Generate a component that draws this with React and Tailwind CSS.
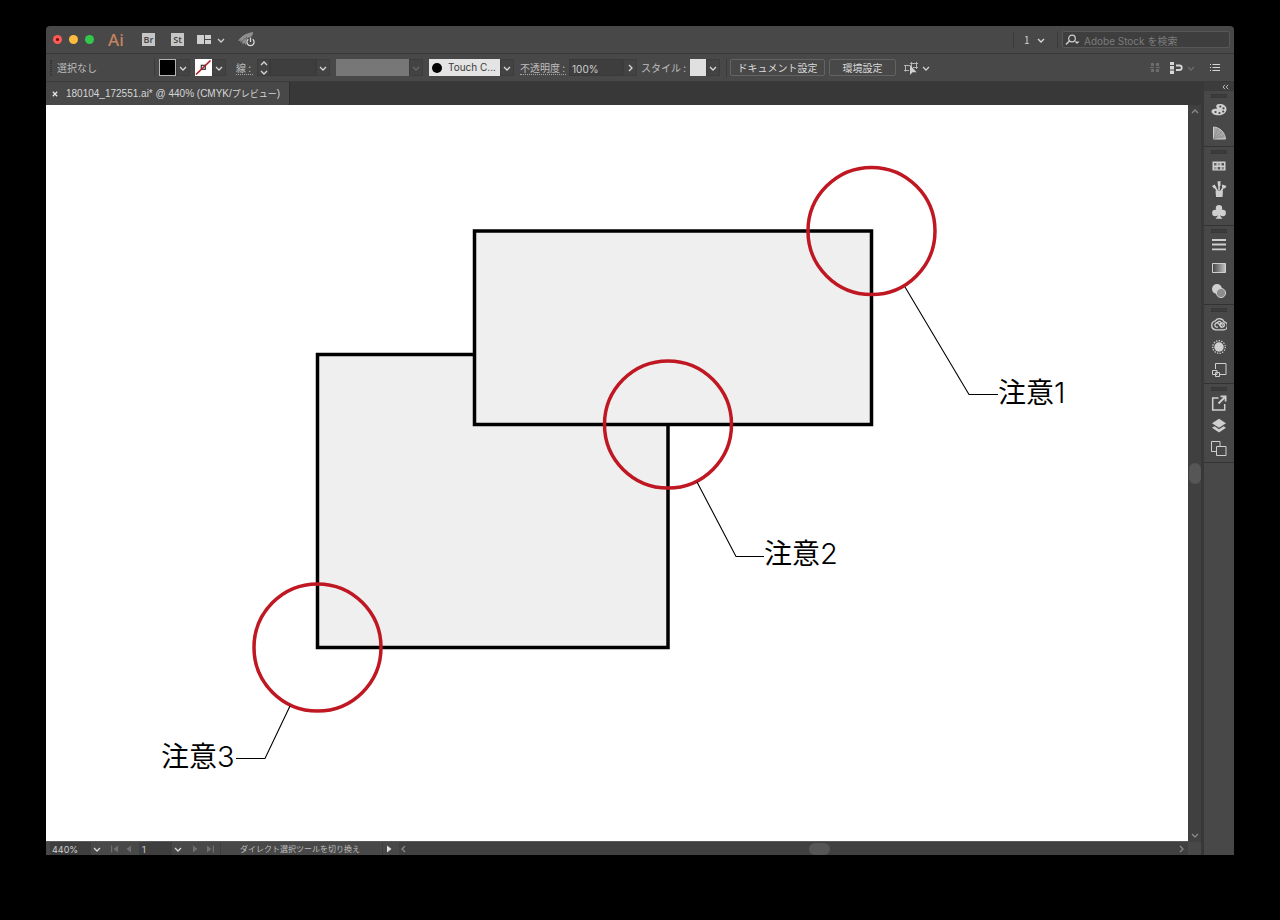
import React from "react";

function Chevron({ dir = "down", className = "" }) {
  const paths = {
    down: "M1 3 L4 6 L7 3",
    up: "M1 5 L4 2 L7 5",
    left: "M5 1 L2 4 L5 7",
    right: "M3 1 L6 4 L3 7",
  };
  return (
    <svg viewBox="0 0 8 8" className={`size-2 shrink-0 ${className}`} fill="none" stroke="currentColor" strokeWidth="1.3" aria-hidden="true">
      <path d={paths[dir]} />
    </svg>
  );
}

function ArrowButton({ label, dir = "down", className = "text-[#d8d8d8]" }) {
  return (
    <button type="button" aria-label={label} className={`flex h-[17px] w-[14px] shrink-0 items-center justify-center border border-[#3d3d3d] bg-[#434343] ${className}`}>
      <Chevron dir={dir} />
    </button>
  );
}

function Divider({ className = "h-[18px]" }) {
  return <span className={`w-px shrink-0 bg-[#3a3a3a] ${className}`} />;
}

function TitleBar() {
  return (
    <header className="flex h-[28px] shrink-0 items-center border-b border-[#383838] pr-[4px] pl-[7px]">
      <div className="flex items-center gap-[7px]">
        <button type="button" aria-label="閉じる" className="flex size-[9px] items-center justify-center rounded-full bg-[#fc5b57]">
          <span className="size-[3px] rounded-full bg-[#6b0d0a]" />
        </button>
        <button type="button" aria-label="しまう" className="size-[9px] rounded-full bg-[#fdbc40]" />
        <button type="button" aria-label="拡大" className="size-[9px] rounded-full bg-[#34c84a]" />
      </div>
      <span className="ml-[14px] w-[34px] font-['Noto_Sans',sans-serif] text-[17px] leading-[20px] font-medium text-[#c4845f]">Ai</span>
      <button type="button" className="h-[13px] w-[13px] bg-[#c6c6c6] text-center font-['Noto_Sans',sans-serif] text-[9px] leading-[13px] font-semibold text-[#484848]">Br</button>
      <button type="button" className="ml-4 h-[13px] w-[13px] bg-[#c6c6c6] text-center font-['Noto_Sans',sans-serif] text-[9px] leading-[13px] font-semibold text-[#484848]">St</button>
      <button type="button" aria-label="ドキュメントレイアウト" className="ml-[13px] flex items-center gap-[6px] text-[#cfcfcf]">
        <svg viewBox="0 0 14 9" className="h-[9px] w-[14px]" fill="currentColor" aria-hidden="true">
          <path d="M0 0h7v9H0zM8 0h6v4H8zM8 5h6v4H8z" />
        </svg>
        <Chevron />
      </button>
      <button type="button" aria-label="GPU パフォーマンス" className="ml-[13px]">
        <svg viewBox="0 0 18 15" className="h-[15px] w-[18px]" fill="none" aria-hidden="true">
          <path d="M0 9 C3 4 8 1 15 0 C15.500 3 13 5 11 6 C9 8 8.500 11 8 13.500 L6.500 11 L4.500 12.500 L4.500 10 L2 10.500 L3 8.500 Z" fill="#8f8f8f" />
          <path d="M3 10 L9 5" stroke="#5a5a5a" strokeWidth=".8" />
          <circle cx="12.500" cy="10" r="4.800" fill="#484848" />
          <path d="M10.300 7.200a3.600 3.600 0 1 0 4.400 0M12.500 5.500v4.500" stroke="#d6d6d6" strokeWidth="1.300" />
        </svg>
      </button>
      <div className="ml-auto flex items-center">
        <Divider className="h-[16px]" />
        <div className="relative ml-[10px] flex items-center">
          <select aria-label="ワークスペース" className="w-[21px] appearance-none bg-transparent text-[10px] leading-[14px] text-[#cfcfcf] outline-none" defaultValue="1">
            <option>1</option>
          </select>
          <Chevron className="pointer-events-none absolute right-0 text-[#d8d8d8]" />
        </div>
        <Divider className="ml-[12px] h-[16px]" />
        <label className="ml-[4px] flex h-[17px] w-[168px] items-center rounded-[2px] border border-[#575757] bg-[#3e3e3e] pl-[2px]">
          <svg viewBox="0 0 15 12" className="h-[12px] w-[15px] shrink-0" fill="none" aria-hidden="true">
            <circle cx="7" cy="4.500" r="3.300" stroke="#cfcfcf" strokeWidth="1.200" />
            <path d="M4.600 6.800 L1 10.500" stroke="#cfcfcf" strokeWidth="1.400" />
            <path d="M9.500 7.500h5L12 10z" fill="#cfcfcf" />
          </svg>
          <input type="search" aria-label="Adobe Stock を検索" placeholder="Adobe Stock を検索" className="ml-[4px] min-w-0 flex-1 bg-transparent pt-[2px] font-[Inter,'Noto_Sans_CJK_JP',sans-serif] text-[10px] leading-[14px] text-[#cfcfcf] outline-none placeholder:text-[#7c7c7c]" />
        </label>
      </div>
    </header>
  );
}

function ControlBar() {
  return (
    <div className="flex h-[28px] shrink-0 items-center border-b border-[#3a3a3a] pr-[14px] pl-[4px] text-[10px] text-[#bdbdbd]">
      <span className="h-[16px] w-[2px] shrink-0 border-x border-dotted border-[#333]" />
      <span className="ml-[5px] w-[97px] shrink-0">選択なし</span>
      <Divider />
      <button type="button" aria-label="塗り" className="ml-[4px] size-[17px] shrink-0 border border-[#b4b4b4] bg-black" />
      <ArrowButton label="塗りの一覧" />
      <button type="button" aria-label="線のカラー" className="ml-[5px] size-[17px] shrink-0 bg-white">
        <svg viewBox="0 0 17 17" className="size-[17px]" fill="none" aria-hidden="true">
          <rect x="6.300" y="6.300" width="4" height="4" stroke="#333" strokeWidth="1.200" />
          <path d="M1 15.500 L15.500 1.500" stroke="#b01e24" strokeWidth="1.700" />
        </svg>
      </button>
      <ArrowButton label="線のカラー一覧" />
      <label htmlFor="stroke" className="ml-[10px] w-[17px] shrink-0 border-b border-dotted border-[#a8a8a8] leading-[13px] whitespace-nowrap">線 :</label>
      <div className="ml-[4px] flex h-[17px] w-[13px] shrink-0 flex-col items-center border border-[#3a3a3a] bg-[#434343] text-[#d8d8d8]">
        <button type="button" aria-label="増やす"><Chevron dir="up" className="block" /></button>
        <button type="button" aria-label="減らす"><Chevron className="block" /></button>
      </div>
      <input id="stroke" type="text" className="h-[17px] w-[46px] shrink-0 border border-[#3a3a3a] bg-[#3e3e3e] px-1 outline-none" />
      <ArrowButton label="線幅の一覧" />
      <button type="button" aria-label="可変線幅プロファイル" disabled className="ml-[6px] h-[17px] w-[73px] shrink-0 bg-[#777]" />
      <ArrowButton label="プロファイル一覧" className="text-[#666]" />
      <div className="relative ml-[6px] flex shrink-0 items-center">
        <span className="pointer-events-none absolute left-[3px] size-[10px] rounded-full bg-black" />
        <select aria-label="ブラシ定義" defaultValue="Touch C..." className="h-[17px] w-[71px] appearance-none bg-[#e4e4e4] pl-[19px] font-[Inter,sans-serif] text-[10px] text-[#3a3a3a] outline-none">
          <option>Touch C...</option>
        </select>
        <ArrowButton label="ブラシ一覧" />
      </div>
      <label htmlFor="opacity" className="ml-[6px] w-[46px] shrink-0 border-b border-dotted border-[#a8a8a8] leading-[13px] whitespace-nowrap">不透明度 :</label>
      <input id="opacity" type="text" defaultValue="100%" className="ml-[3px] h-[17px] w-[54px] shrink-0 border border-[#3a3a3a] bg-[#3e3e3e] pt-[2px] pl-[2px] font-[Inter,sans-serif] text-[10px] text-[#cfcfcf] outline-none" />
      <ArrowButton label="不透明度スライダー" dir="right" />
      <span className="ml-[4px] w-[49px] shrink-0 whitespace-nowrap">スタイル :</span>
      <button type="button" aria-label="グラフィックスタイル" className="h-[17px] w-[16px] shrink-0 bg-[#e0e0e0]" />
      <ArrowButton label="スタイル一覧" />
      <Divider className="ml-[6px] h-[18px]" />
      <button type="button" className="ml-[3px] h-[17px] w-[95px] shrink-0 rounded-[2px] border border-[#636363] leading-[15px] whitespace-nowrap text-[#dadada]">ドキュメント設定</button>
      <button type="button" className="ml-[4px] h-[17px] w-[67px] shrink-0 rounded-[2px] border border-[#636363] leading-[15px] whitespace-nowrap text-[#dadada]">環境設定</button>
      <button type="button" aria-label="類似オブジェクトを選択" className="ml-[8px] flex shrink-0 items-center gap-[4px] text-[#d0d0d0]">
        <svg viewBox="0 0 14 14" className="size-[14px]" fill="none" aria-hidden="true">
          <path d="M0 4.500h6M1.500 4.500v6M0 9.500h5M6 2.500h8M7.500 1v5M12.500 1v7M9 6.500h5" stroke="#b5b5b5" />
          <path d="M6 4v10l2.600-2.700h4z" fill="#d0d0d0" />
        </svg>
        <Chevron />
      </button>
      <div className="ml-auto flex items-center">
        <button type="button" aria-label="整列" disabled className="text-[#6c6c6c]">
          <svg viewBox="0 0 10 10" className="size-[10px]" fill="currentColor" aria-hidden="true">
            <path d="M1 0h3v3H1zM6 0h3v3H6zM1 6h3v3H1zM6 6h3v3H6zM0 4h4v1H0zM6 4h4v1H6z" />
          </svg>
        </button>
        <button type="button" aria-label="ピクセルグリッドに整合" className="ml-[10px] text-[#d6d6d6]">
          <svg viewBox="0 0 13 12" className="h-[12px] w-[13px]" fill="none" aria-hidden="true">
            <path d="M0 0h4v3H0zM0 4h4v3.500H0zM0 8.500h4V12H0z" fill="currentColor" />
            <path d="M6 3.500h3.500a2.200 2.200 0 0 1 0 4.500H6" stroke="currentColor" strokeWidth="1.800" />
          </svg>
        </button>
        <Chevron className="ml-[4px] text-[#6c6c6c]" />
        <button type="button" aria-label="コントロールメニュー" className="ml-[15px] text-[#d6d6d6]">
          <svg viewBox="0 0 10 8" className="h-[8px] w-[10px]" fill="currentColor" aria-hidden="true">
            <path d="M0 0h1v1H0zM2.500 0H10v1H2.500zM0 3h1v1H0zM2.500 3H10v1H2.500zM0 6h1v1H0zM2.500 6H10v1H2.500z" />
          </svg>
        </button>
      </div>
    </div>
  );
}

function TabBar() {
  return (
    <div role="tablist" className="flex h-[23px] shrink-0 items-stretch bg-[#383838]">
      <div role="tab" aria-selected="true" className="flex items-center border-r border-[#2e2e2e] bg-[#484848] pr-[9px] pl-[6px] text-[10px] text-[#d6d6d6]">
        <button type="button" aria-label="タブを閉じる" className="text-[#e6e6e6]">
          <svg viewBox="0 0 6 6" className="size-[6px]" stroke="currentColor" strokeWidth="1.300" aria-hidden="true">
            <path d="M.8.8 5.200 5.200M5.200.8.8 5.200" />
          </svg>
        </button>
        <span className="ml-[8px] font-['Liberation_Sans','Noto_Sans_CJK_JP',sans-serif] whitespace-nowrap">
          180104_172551.ai* @ 440% (CMYK/<span className="text-[9px]">プレビュー</span>)
        </span>
      </div>
    </div>
  );
}

const circles = [
  [871.5, 231],
  [668, 424.5],
  [317.5, 647.5],
];
const notes = [
  { text: "注意", n: "1", x: 998, y: 403, line: "905,287 969,394.5 998,394.5" },
  { text: "注意", n: "2", x: 764, y: 564, line: "697,482 736,556.5 764,556.5" },
  { text: "注意", n: "3", x: 161, y: 767, line: "290,706 265,758.5 236,758.5" },
];

function Artboard() {
  return (
    <main className="flex min-h-0 flex-1 bg-white">
      <svg viewBox="46 105 1142 736" className="h-full w-full" fill="none">
        <rect x="317.5" y="354.5" width="350.5" height="293" fill="#efefef" stroke="#000" strokeWidth="3.500" />
        <rect x="474.500" y="231" width="397" height="193.500" fill="#efefef" stroke="#000" strokeWidth="3.500" />
        {circles.map(([cx, cy]) => (
          <circle key={cx} cx={cx} cy={cy} r="63.500" stroke="#bf1822" strokeWidth="3.500" />
        ))}
        {notes.map((note) => (
          <g key={note.n}>
            <polyline points={note.line} stroke="#000" strokeWidth="1.100" />
            <text x={note.x} y={note.y} fill="#000" className="font-['Noto_Sans_CJK_JP',sans-serif] text-[28px]">
              {note.text}
              <tspan className="font-[Inter,sans-serif] text-[29px] font-light">{note.n}</tspan>
            </text>
          </g>
        ))}
      </svg>
    </main>
  );
}

function StepIcon({ dir, bar }) {
  return (
    <svg viewBox="0 0 8 8" className={dir === "left" ? "size-2" : "size-2 rotate-180"} fill="currentColor" aria-hidden="true">
      <path d="M7 .5v7L2.500 4z" />
      {bar && <path d="M0 .5h1.200v7H0z" />}
    </svg>
  );
}

function StatusBar() {
  return (
    <footer className="flex h-[14px] shrink-0 items-center overflow-hidden border-t border-[#5a5a5a] bg-[#404040] text-[#bdbdbd]">
      <div className="flex h-full shrink-0 items-center bg-[#484848] pl-[4px]">
        <select aria-label="ズーム" defaultValue="440%" className="h-[13px] w-[41px] appearance-none bg-[#3e3e3e] pt-[2px] pl-[2px] font-[Inter,sans-serif] text-[9px] leading-[11px] text-[#cfcfcf] outline-none">
          <option>440%</option>
        </select>
        <Chevron className="mr-[8px] ml-[2px] text-[#d8d8d8]" />
        <button type="button" aria-label="最初のアートボード" className="ml-[2px] text-[#707070]"><StepIcon dir="left" bar /></button>
        <button type="button" aria-label="前のアートボード" className="ml-[5px] text-[#707070]"><StepIcon dir="left" /></button>
        <select aria-label="アートボード" defaultValue="1" className="ml-[7px] h-[13px] w-[33px] appearance-none bg-[#3e3e3e] pt-[2px] pl-[3px] font-[Inter,sans-serif] text-[9px] leading-[11px] text-[#cfcfcf] outline-none">
          <option>1</option>
        </select>
        <Chevron className="ml-[2px] text-[#d8d8d8]" />
        <button type="button" aria-label="次のアートボード" className="ml-[10px] text-[#707070]"><StepIcon dir="right" /></button>
        <button type="button" aria-label="最後のアートボード" className="ml-[6px] text-[#707070]"><StepIcon dir="right" bar /></button>
        <span className="ml-[6px] w-[163px] border-x border-[#3e3e3e] pl-[19px] text-[8px] leading-[13px] whitespace-nowrap">ダイレクト選択ツールを切り換え</span>
        <button type="button" aria-label="ステータス表示" className="mr-[5px] ml-[3px] text-[#e0e0e0]"><StepIcon dir="right" /></button>
      </div>
      <div className="flex min-w-0 flex-1 items-center pr-[3px] pl-[1px] text-[#8a8a8a]">
        <Chevron dir="left" />
        <span className="grow-[402]" />
        <span className="h-[12px] w-[21px] shrink-0 rounded-full bg-[#565656]" />
        <span className="grow-[348]" />
        <Chevron dir="right" />
      </div>
    </footer>
  );
}

function VerticalScroll() {
  return (
    <div className="flex w-[13px] shrink-0 flex-col items-center bg-[#404040] pt-[3px] text-[#8a8a8a]">
      <Chevron dir="up" />
      <span className="my-auto h-[21px] w-[12px] rounded-full bg-[#565656]" />
      <Chevron />
      <span className="mt-[3px] h-[13px] w-full shrink-0 bg-[#484848]" />
    </div>
  );
}

const icons = {
  カラー: (
    <>
      <path d="M8.500 2c4.200 0 7 2 7 5.300s-3.200 6-8 6C3.500 13.300.5 11.800.5 9.300.5 7.300 3 6.500 4.500 6.800 6 7 6.200 6.300 5.500 5.200 4.500 3.500 6 2 8.500 2z" fill="#cfcfcf" />
      <g fill="#484848"><circle cx="9.300" cy="4.500" r="1.100" /><circle cx="12.500" cy="6.300" r="1.100" /><circle cx="12.200" cy="9.500" r="1.100" /><circle cx="8.500" cy="11" r="1.100" /><circle cx="4.500" cy="10" r="1.100" /></g>
    </>
  ),
  カラーガイド: (
    <>
      <path d="M2.500 2v12H14.500C14 7.500 9 2.500 2.500 2z" fill="#a4a4a4" stroke="#cfcfcf" />
      <path d="M2.500 14 7 3.500M2.500 14 11 6.500M2.500 14 13.500 10.500" stroke="#888" strokeWidth=".7" />
    </>
  ),
  スウォッチ: (
    <>
      <path d="M1.500 3.500h13v9h-13z" fill="#cfcfcf" />
      <path d="M3 5h2.500v2.500H3z" fill="#666" /><path d="M6.700 5h2.500v2.500H6.700zM3 9h2.500v2.500H3z" fill="#999" /><path d="M10.500 5H13v2.500h-2.500zM6.700 9h2.500v2.500H6.700z" fill="#555" /><path d="M10.500 9H13v2.500h-2.500z" fill="#888" />
    </>
  ),
  ブラシ: (
    <>
      <path d="M4.500 9.500h7.500L11.500 16h-6.500z" fill="#cfcfcf" />
      <path d="M6.500 10 3.500 5.500M8 9V3M10 10l3-4.500" stroke="#cfcfcf" strokeWidth="1.600" />
      <path d="M1 5 3.500 3.500 5.500 6.500 3 7.500zM6.500 .5 9.500 0 9.500 5H7zM11 3.500 15.500 5 14 7.500 11 6.500z" fill="#cfcfcf" />
    </>
  ),
  シンボル: (
    <g fill="#cfcfcf">
      <circle cx="8" cy="4.300" r="3.200" /><circle cx="4.300" cy="9" r="3.200" /><circle cx="11.700" cy="9" r="3.200" /><path d="M7 6h2l.2 6 2.300 2.700h-7L6.800 12z" />
    </g>
  ),
  線: <path d="M1 3h14M1 7.500h14M1 12.300h14" stroke="#cfcfcf" strokeWidth="1.800" />,
  グラデーション: (
    <>
      <defs><linearGradient id="grad"><stop stopColor="#444" /><stop offset="1" stopColor="#c4c4c4" /></linearGradient></defs>
      <path d="M1.500 3.500h13v9h-13z" fill="url(#grad)" stroke="#cfcfcf" />
    </>
  ),
  透明: (
    <>
      <circle cx="6" cy="6" r="5" fill="#cfcfcf" />
      <circle cx="10" cy="10" r="4.600" fill="#8e8e8e" stroke="#cfcfcf" />
    </>
  ),
  "CC ライブラリ": (
    <g stroke="#cfcfcf" strokeWidth="1.300">
      <path d="M4.500 13.800h7a4 4 0 0 0 1.700-8A5.200 5.200 0 0 0 4.300 4.800 4.600 4.600 0 0 0 4.500 13.800z" />
      <path d="M10.800 11.500 7.500 7.500a2.200 2.200 0 0 0-3 0 2.200 2.200 0 0 0 1 3.700H7M6.500 6.500C7.500 4.800 9.500 5.300 10.200 7l1.500 2.500" />
      <circle cx="11.200" cy="9" r="2.100" />
    </g>
  ),
  アピアランス: (
    <>
      <circle cx="8" cy="8" r="4.700" fill="#cfcfcf" />
      <circle cx="8" cy="8" r="6.300" stroke="#cfcfcf" strokeWidth="1.300" strokeDasharray="1.300 1.300" />
    </>
  ),
  グラフィックスタイル: (
    <g stroke="#cfcfcf">
      <path d="M4.500 7V1.500h10.500v11H8.500" />
      <path d="M1.500 8.500h4.500v4H1.500z" /><path d="M4.500 10.500h4v4h-4z" />
    </g>
  ),
  アセットの書き出し: (
    <>
      <path d="M7.500 3H1.700v12h12V9" stroke="#cfcfcf" strokeWidth="1.500" />
      <path d="M7.500 8.500 13.500 2.500" stroke="#cfcfcf" strokeWidth="1.900" />
      <path d="M9.500.5h6v6h-1.800V3.500L12 2.300H9.500z" fill="#cfcfcf" />
    </>
  ),
  レイヤー: (
    <>
      <path d="M8 .8 15 5.300 8 9.800 1 5.300z" fill="#cfcfcf" />
      <path d="M1 9.800 3.500 8.300 8 11.200 12.500 8.300l2.500 1.500L8 14.500z" fill="#cfcfcf" />
    </>
  ),
  アートボード: (
    <g stroke="#cfcfcf">
      <path d="M5.500 10.500h-5v-10h8.500V5" /><path d="M5.500 5.500h9.500v9h-9.500z" />
    </g>
  ),
};

const groups = [
  ["カラー", "カラーガイド"],
  ["スウォッチ", "ブラシ", "シンボル"],
  ["線", "グラデーション", "透明"],
  ["CC ライブラリ", "アピアランス", "グラフィックスタイル"],
  ["アセットの書き出し", "レイヤー", "アートボード"],
];

function Dock() {
  return (
    <aside className="ml-[3px] flex w-[30px] shrink-0 flex-col bg-[#484848]">
      <button type="button" aria-label="パネルを展開" className="flex h-[9px] items-center justify-end bg-[#3c3c3c] pr-[5px] text-[#bdbdbd]">
        <svg viewBox="0 0 7 6" className="h-[6px] w-[7px]" fill="none" stroke="currentColor" aria-hidden="true">
          <path d="M3 .8 1 3l2 2.200M6.200.8 4.200 3l2 2.200" />
        </svg>
      </button>
      {groups.map((group) => (
        <div key={group[0]} className="flex flex-col items-center border-b border-[#333] pt-[3px] pb-[2px]">
          <span className="h-[4px] w-[16px] border-y border-dotted border-[#333] bg-[#3c3c3c]" />
          {group.map((name) => (
            <button key={name} type="button" aria-label={name} className="flex h-[23px] w-full items-center justify-center">
              <svg viewBox="0 0 16 16" className="size-4" fill="none" aria-hidden="true">{icons[name]}</svg>
            </button>
          ))}
        </div>
      ))}
    </aside>
  );
}

export default function App() {
  return (
    <div className="flex min-h-screen flex-col bg-black px-[46px] pt-[26px] pb-[65px] font-['Noto_Sans_CJK_JP',sans-serif]">
      <div className="flex min-w-0 flex-1 flex-col overflow-hidden rounded-t-[4px] bg-[#484848]">
        <TitleBar />
        <ControlBar />
        <div className="flex min-h-0 flex-1 bg-[#383838]">
          <div className="flex min-w-0 flex-1 flex-col">
            <TabBar />
            <div className="flex min-h-0 flex-1">
              <div className="flex min-w-0 flex-1 flex-col">
                <Artboard />
                <StatusBar />
              </div>
              <VerticalScroll />
            </div>
          </div>
          <Dock />
        </div>
      </div>
    </div>
  );
}
